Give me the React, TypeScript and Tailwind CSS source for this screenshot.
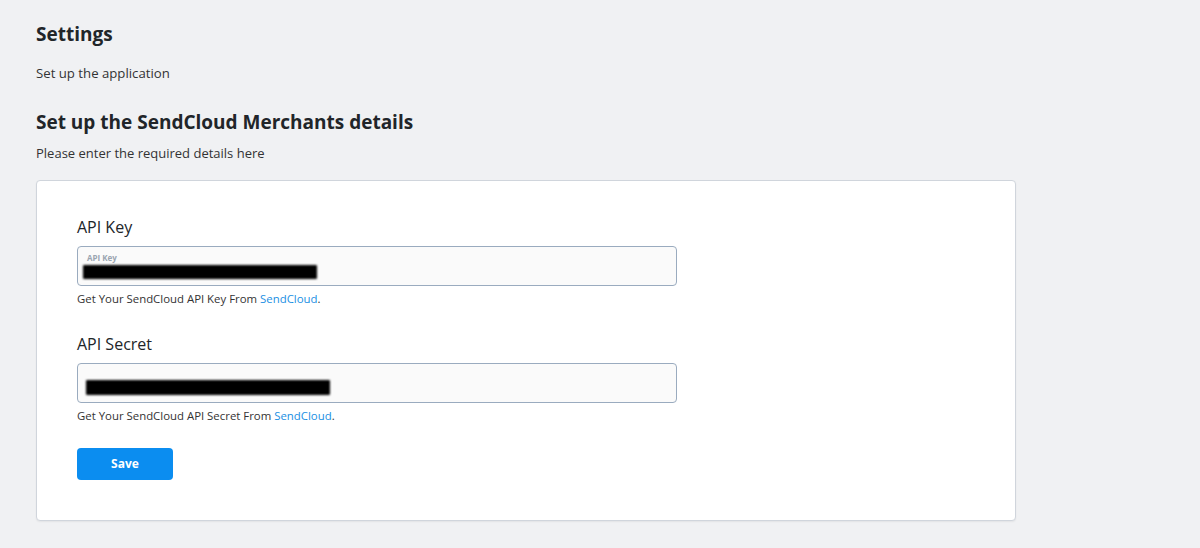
import React from 'react'

const font = { fontFamily: '"Open Sans", "Noto Sans", sans-serif' }

function Field({
  label,
  inner,
  barWidth,
  note,
}: {
  label: string
  inner?: string
  barWidth: string
  note: string
}) {
  return (
    <div>
      <label className="block text-[16px] leading-5 text-[#212529]">{label}</label>
      <div className="mt-[9px] h-10 w-[600px] rounded-[4px] border border-[#9aabbf] bg-[#fafafa]">
        {inner ? (
          <div className="pt-[6px] pl-[5px]">
            <span className="block pl-[4px] text-[8px] font-bold leading-[10px] text-[#9aa5b1]">{inner}</span>
            <div className={`mt-[2px] h-[14px] ${barWidth} rounded-[1px] bg-black blur-[1px]`} />
          </div>
        ) : (
          <div className={`mt-[16px] ml-[8px] h-[15px] ${barWidth} rounded-[1px] bg-black blur-[1px]`} />
        )}
      </div>
      <p className="mt-[5px] text-[11.4px] leading-4 text-[#333]">
        {note} <a className="text-[#1a8fe3]">SendCloud</a>.
      </p>
    </div>
  )
}

export default function App() {
  return (
    <div className="min-h-[548px] bg-[#f0f1f3] px-9 pt-[22px] text-[#212529]" style={font}>
      <h1 className="text-[19px] font-bold leading-6 text-[#212529]">Settings</h1>
      <p className="mt-[17px] text-[13.2px] leading-5 text-[#333]">Set up the application</p>
      <h2 className="mt-[25px] text-[19px] font-bold leading-7 text-[#212529]">
        Set up the SendCloud Merchants details
      </h2>
      <p className="mt-[7px] text-[13px] leading-5 text-[#333]">Please enter the required details here</p>
      <div className="mt-[17px] w-[980px] rounded-[4px] border border-[#d0d5dc] bg-white px-10 pt-[36px] pb-10 shadow-[0_1px_2px_rgba(0,0,0,0.06)]">
        <Field label="API Key" inner="API Key" barWidth="w-[234px]" note="Get Your SendCloud API Key From" />
        <div className="mt-[27px]">
          <Field label="API Secret" barWidth="w-[244px]" note="Get Your SendCloud API Secret From" />
        </div>
        <button className="mt-[24px] h-8 w-[96px] rounded-[4px] bg-[#0b8df0] text-[12px] font-bold text-white">
          Save
        </button>
      </div>
    </div>
  )
}
